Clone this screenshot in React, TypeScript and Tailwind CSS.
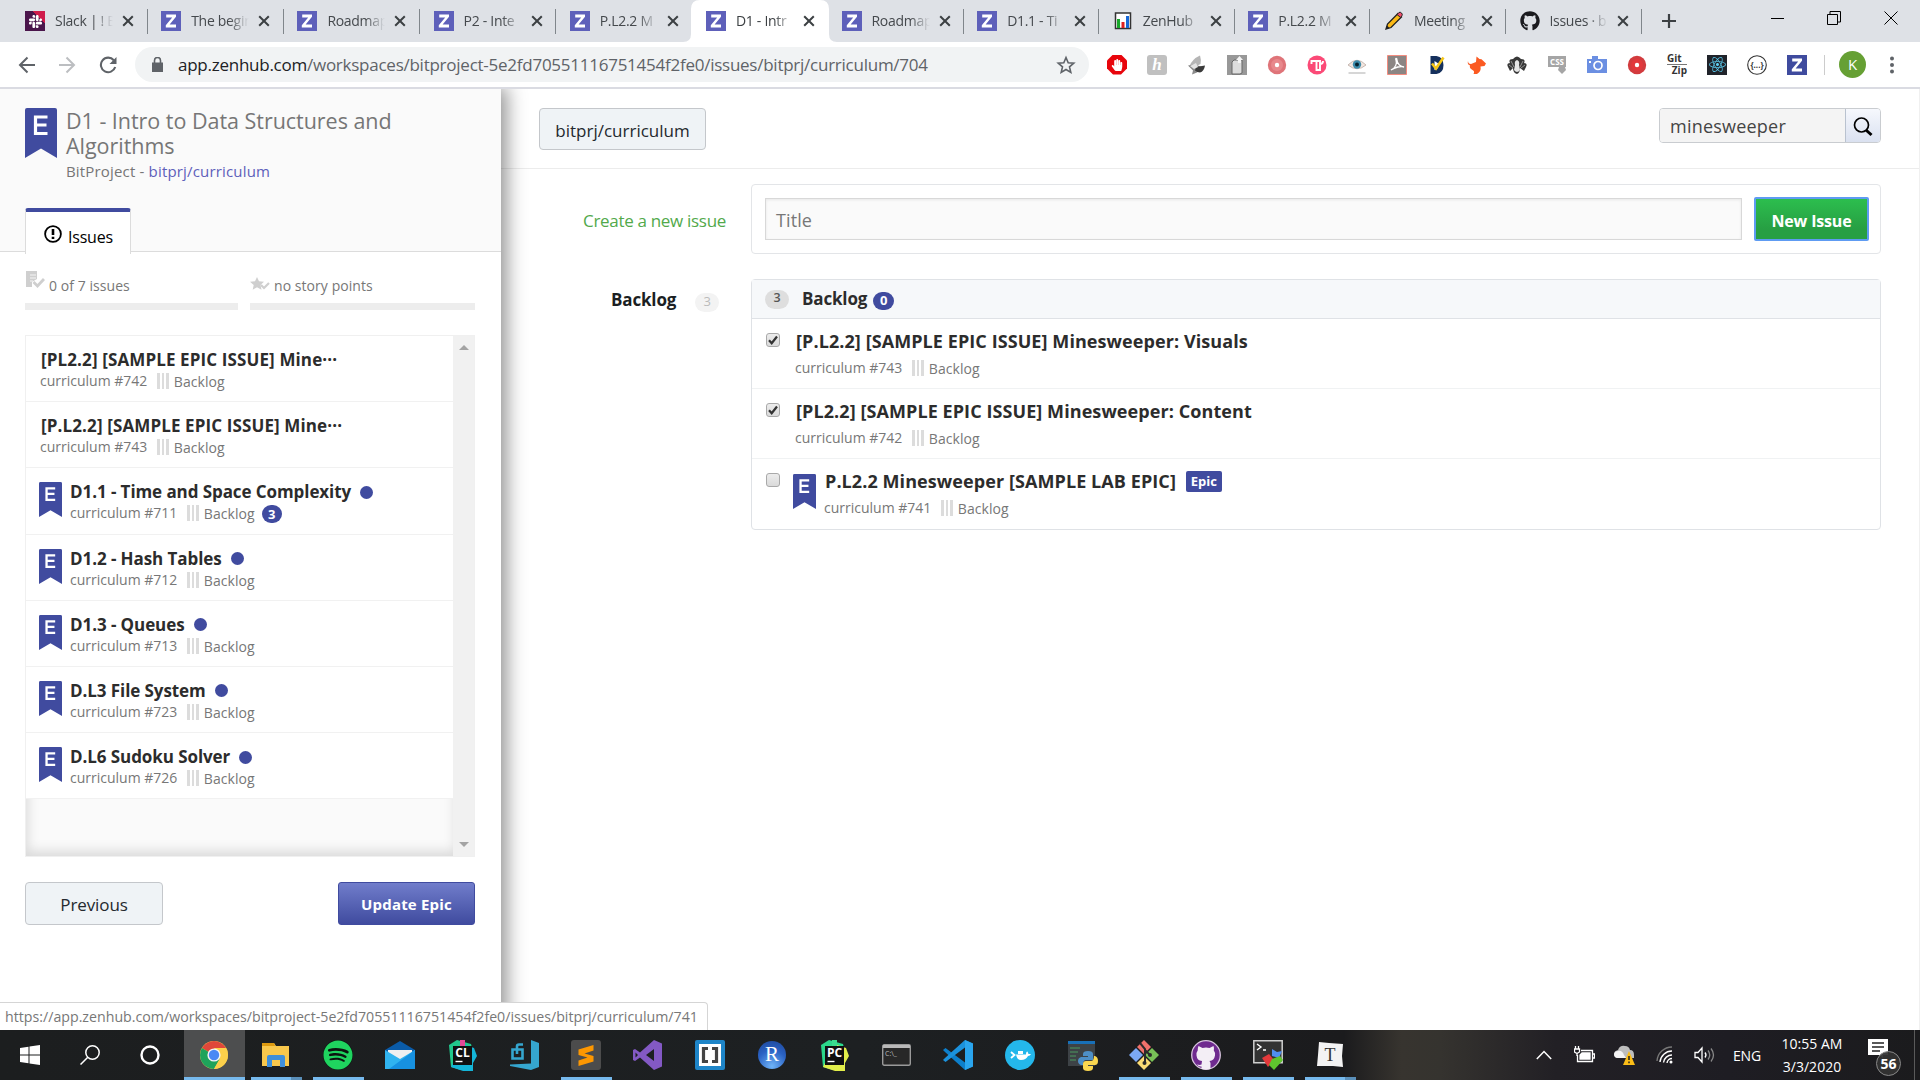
import type { ReactNode } from 'react';
import { FaGithub, FaSpotify, FaReact, FaHandPaper, FaSlack } from 'react-icons/fa';

/* ---------- shared pieces ---------- */

function ZIcon() {
  return (
    <svg width="20" height="20" viewBox="0 0 20 20">
      <rect width="20" height="20" fill="#5e60ba" />
      <path d="M5.2 3.5h9.8v2.3L8.6 13.6H15v3H4.8v-2.4l6.4-7.8H5.2z" fill="#fff" />
    </svg>
  );
}

function Bookmark({ w, h }: { w: number; h: number }) {
  return (
    <svg width={w} height={h} viewBox="0 0 32 50" preserveAspectRatio="none" className="block shrink-0">
      <path d="M2 0h28a2 2 0 0 1 2 2v48L16 40.5 0 50V2a2 2 0 0 1 2-2z" fill="#404b9f" />
      <path d="M22.5 9H10.5v16.5h12M10.500 17h11" fill="none" stroke="#fff" strokeWidth="3.200" />
    </svg>
  );
}

function Bars() {
  return (
    <div className="flex gap-[2px]">
      <i className="h-4 w-[2.6px] bg-[#dcdcdc]" />
      <i className="h-4 w-[2.6px] bg-[#dcdcdc]" />
      <i className="h-4 w-[2.6px] bg-[#dcdcdc]" />
    </div>
  );
}

function Meta({ n }: { n: number }) {
  return (
    <div className="flex items-center text-[14px] leading-5 text-[#777]">
      <span className="w-[117px]">curriculum #{n}</span>
      <Bars />
      <span className="ml-[5px] mt-[2px] tracking-[0.08px]">Backlog</span>
    </div>
  );
}

/* ---------- browser chrome ---------- */

const tabs: { icon: string; title: string }[] = [
  { icon: 'slack', title: 'Slack | ! B' },
  { icon: 'z', title: 'The begin' },
  { icon: 'z', title: 'Roadmap' },
  { icon: 'z', title: 'P2 - Inte' },
  { icon: 'z', title: 'P.L2.2 M' },
  { icon: 'z', title: 'D1 - Intr' },
  { icon: 'z', title: 'Roadmap' },
  { icon: 'z', title: 'D1.1 - Ti' },
  { icon: 'chart', title: 'ZenHub' },
  { icon: 'z', title: 'P.L2.2 M' },
  { icon: 'pencil', title: 'Meeting' },
  { icon: 'github', title: 'Issues · b' },
];

function Favicon({ kind }: { kind: string }) {
  if (kind === 'z') return <ZIcon />;
  if (kind === 'github') return <FaGithub size={20} color="#1b1b1f" />;
  if (kind === 'slack')
    return (
      <div className="flex size-5 items-center justify-center bg-[linear-gradient(45deg,#4a154b_68%,#cf1b4b_69%)]">
        <FaSlack size={15} color="#fff" />
      </div>
    );
  if (kind === 'chart')
    return (
      <svg width="20" height="20" viewBox="0 0 20 20">
        <path d="M2.5 2h15v15.500H2.500z" fill="#fff" stroke="#333" strokeWidth="1.500" />
        <path d="M4 8h3v9H4z" fill="#19a82b" />
        <path d="M8.500 11h3v6h-3z" fill="#e02020" />
        <path d="M13 5h3v12h-3z" fill="#1668d8" />
      </svg>
    );
  return (
    <svg width="20" height="20" viewBox="0 0 20 20">
      <path d="M2 18l1.500-5L14 2.500l3.500 3.500L7 16.500z" fill="#fbb915" stroke="#222" strokeWidth="1.300" />
      <path d="M13 3.500L15 1.500q1.200-.8 2.500.5t.5 2.500L16.500 6.500z" fill="#f0506e" stroke="#222" />
      <path d="M2 18l1-3.500 2.500 2.500z" fill="#222" />
    </svg>
  );
}

function Tab({ icon, title, active, sep, wide }: { icon: string; title: string; active: boolean; sep: boolean; wide: boolean }) {
  return (
    <div className={`relative flex h-[42px] shrink-0 items-center pl-[13.500px] ${wide ? 'w-[136.2px]' : 'w-[135.6px]'}`}>
      {active && (
        <svg className="absolute -left-[9px] top-0" width="154" height="42" viewBox="0 0 154 42">
          <path d="M0 42q8 0 8-8V9q0-9 9-9h120q9 0 9 9v25q0 8 8 8z" fill="#fff" />
        </svg>
      )}
      <span className="relative flex size-5">
        <Favicon kind={icon} />
      </span>
      <span
        className={`relative ml-[10px] w-[58px] overflow-hidden whitespace-nowrap text-[14px] leading-5 tracking-[-0.3px] [mask-image:linear-gradient(to_right,#000_66%,transparent_100%)] ${active ? 'text-[#3c4043]' : 'text-[#45494d]'}`}
      >
        {title}
      </span>
      <svg className="relative ml-[9px]" width="12" height="12" viewBox="0 0 12 12">
        <path d="M1.200 1.200l9.600 9.600M10.800 1.200L1.200 10.800" stroke="#3c4043" strokeWidth="2" />
      </svg>
      {sep && <i className="absolute right-0 top-[9px] h-[25px] w-px bg-[#80868b]" />}
    </div>
  );
}

function TabStrip() {
  return (
    <div className="flex h-[42px] items-center bg-[#dee1e6] pl-[11.500px]">
      {tabs.map((t, i) => (
        <Tab key={i} icon={t.icon} title={t.title} active={i === 5} sep={i !== 4 && i !== 5} wide={i < 5} />
      ))}
      <svg className="ml-[19px]" width="16" height="16" viewBox="0 0 16 16">
        <path d="M8 1v14M1 8h14" stroke="#3c4043" strokeWidth="2.200" />
      </svg>
      <div className="ml-auto flex items-center gap-[43px] pb-[6px] pr-[22px]">
        <svg width="13" height="13" viewBox="0 0 13 13"><path d="M0 6.500h13" stroke="#000" /></svg>
        <svg width="14" height="14" viewBox="0 0 14 14" fill="none" stroke="#000">
          <path d="M.5 3.500h10v10H.5zM3 3.500V.5h10.500v10.500H10.500" />
        </svg>
        <svg width="14" height="14" viewBox="0 0 14 14"><path d="M.5.5l13 13M13.500.5l-13 13" stroke="#000" /></svg>
      </div>
    </div>
  );
}

const extensions: ReactNode[] = [
  <div className="flex size-5 items-center justify-center bg-[#e8050c] [clip-path:polygon(30%_0,70%_0,100%_30%,100%_70%,70%_100%,30%_100%,0_70%,0_30%)]"><FaHandPaper size={12} color="#fff" /></div>,
  <div className="flex size-5 items-center justify-center rounded-[3px] bg-[#c0c0c0] font-['Liberation_Serif'] text-[17px] font-bold italic leading-5 text-white">h</div>,
  <svg width="20" height="20" viewBox="0 0 20 20">
    <path d="M13 .5Q14.500 5 13.500 9L8 12H2Q5 4 13 .5z" fill="#b5b5b5" />
    <path d="M1 10.500l6-1 7 2-4 6-5 2 1-4z" fill="#8a8a8a" /><path d="M9 12l9-1.500q-1 6-5 7-3 0-5-2z" fill="#3a3a3a" /><path d="M3 11l6-3 2 4-4 2z" fill="#e4e4e4" />
  </svg>,
  <svg width="20" height="20" viewBox="0 0 20 20">
    <path d="M0 0h20v20H0z" fill="#989898" /><path d="M5 7l2-2h8v13l-2 1H5z" fill="#ddd" stroke="#666" />
    <path d="M11 8V5H9l3.500-4L16 5h-2v3z" fill="#f5f5f5" />
  </svg>,
  <svg width="20" height="20" viewBox="0 0 20 20"><circle cx="10" cy="10" r="9.200" fill="#df7479" /><circle cx="10" cy="10" r="6" fill="#e8888c" /><circle cx="10" cy="10" r="2.200" fill="#fff" /></svg>,
  <svg width="20" height="20" viewBox="0 0 20 20"><circle cx="10" cy="10" r="9.500" fill="#fb4a77" /><path d="M4.500 9V6H13v9H9.500V6M13 9q3 0 3-3" stroke="#fff" strokeWidth="1.900" fill="none" /></svg>,
  <svg width="20" height="20" viewBox="0 0 20 20">
    <path d="M1 10Q10 .5 19 10 10 17.500 1 10z" fill="#f3e6df" stroke="#b9aaa3" strokeWidth=".8" /><circle cx="10" cy="9.500" r="4.200" fill="#3d8cab" /><circle cx="10" cy="9.500" r="2" fill="#06222f" />
    <path d="M1.500 18h17" stroke="#ccc" strokeWidth="1.600" />
  </svg>,
  <svg width="20" height="20" viewBox="0 0 20 20">
    <path d="M.5.500h19v19H.5z" fill="#8b8583" stroke="#f28c7f" /><path d="M4 15c5-2 6-7 5-10-1-2 1-2 1 0 0 4 4 7 7 7-3-1-9 0-13 3z" fill="none" stroke="#fff" strokeWidth="1.300" />
  </svg>,
  <svg width="20" height="20" viewBox="0 0 20 20">
    <path d="M3.500 1h6q7 1 7 9t-7 9h-6z" fill="#15305d" /><path d="M7.500 6v9q4.500-1 4.500-6z" fill="#fff" /><path d="M5 8.500l4 5 7.500-11" stroke="#f5c518" strokeWidth="2.600" fill="none" />
  </svg>,
  <svg width="20" height="20" viewBox="0 0 20 20">
    <path d="M1 6q0 3 3 3l5-2 .5-5.500 3 2.500 2 .3L19 8.500 17.500 11l-4 .5q1 5-3.500 7.500H6.500Q8 16 5.500 15 2 13 3 10.500 0 9.500 1 6z" fill="#fb5a22" />
  </svg>,
  <svg width="20" height="20" viewBox="0 0 20 20">
    <path d="M1 12Q-1 8 3 8 1 4 6 4q4-5 8 0 5 0 3 4 4 0 2 4l-2 4-4-3q0 5-3 6-4-1-4-6l-3 3z" fill="#383838" />
    <path d="M10 5q3 1 2 5l1 5q-3 4-6 0l1-5q-1-4 2-5z" fill="#e6e6e6" /><path d="M4 6l3 6M16 6l-3 6M2 10l4 3M18 10l-4 3" stroke="#aaa" strokeWidth=".8" />
  </svg>,
  <svg width="20" height="20" viewBox="0 0 20 20">
    <path d="M1 1h18v11h-1l1 3-4 4-4-4 1-3H1z" fill="#a5a5a5" />
    <text x="10" y="9.500" fontSize="8" fontWeight="700" textAnchor="middle" fill="#fff">CSS</text>
  </svg>,
  <svg width="20" height="20" viewBox="0 0 20 20">
    <path d="M0 4h5V1h6v3h9v14H0z" fill="#6b8fe2" /><circle cx="11" cy="10.500" r="4" fill="none" stroke="#fff" strokeWidth="1.700" /><path d="M2 6h2v2H2z" fill="#fff" />
  </svg>,
  <svg width="20" height="20" viewBox="0 0 20 20"><circle cx="10" cy="10" r="9.200" fill="#d23b3e" /><circle cx="10" cy="10" r="6" fill="#e2383c" /><circle cx="10" cy="10" r="2.200" fill="#fff" /></svg>,
  <div className="flex w-5 flex-col items-start text-[10px] font-bold leading-[11px] text-[#333]"><span className="w-full border-b border-[#777]">Git</span><span className="self-end">Zip</span></div>,
  <div className="flex size-5 items-center justify-center bg-[#20232a]"><FaReact size={17} color="#5ccdf0" /></div>,
  <svg width="20" height="20" viewBox="0 0 20 20">
    <circle cx="10" cy="10" r="9.300" fill="#fff" stroke="#333" strokeWidth="1.100" />
    <text x="10" y="13" fontSize="8" fontWeight="700" textAnchor="middle" fill="#333">{'{...}'}</text>
  </svg>,
  <svg width="20" height="20" viewBox="0 0 20 20"><path d="M0 0h20v20H0z" fill="#3f4b9e" /><path d="M5.200 3.500h9.800v2.300L8.600 13.600H15v3H4.800v-2.400l6.400-7.800H5.200z" fill="#fff" /></svg>,
];

function Toolbar() {
  return (
    <div className="flex h-[47px] items-center border-b-2 border-[#dadbe2] bg-white">
      <svg className="ml-[18px]" width="17" height="18" viewBox="0 0 17 18" fill="none" stroke="#5f6368" strokeWidth="2">
        <path d="M17 9H2M9.500 1.500L2 9l7.500 7.500" />
      </svg>
      <svg className="ml-[24px]" width="17" height="18" viewBox="0 0 17 18" fill="none" stroke="#bcbec1" strokeWidth="2">
        <path d="M0 9h15M7.500 1.500L15 9l-7.500 7.500" />
      </svg>
      <svg className="ml-[23px]" width="18" height="18" viewBox="0 0 18 18">
        <path d="M14.800 4.200A7.300 7.300 0 1 0 16.200 11" fill="none" stroke="#5f6368" strokeWidth="2.100" />
        <path d="M17.500 1v7h-7z" fill="#5f6368" />
      </svg>
      <div className="ml-[18px] flex h-[35px] w-[954px] items-center rounded-full bg-[#f1f3f4] pl-[17px]">
        <svg width="11" height="15" viewBox="0 0 11 15">
          <path d="M0 5.500h11V15H0z" fill="#5f6368" /><path d="M2.500 6V3.500a3 3 0 0 1 6 0V6" fill="none" stroke="#5f6368" strokeWidth="1.600" />
        </svg>
        <span className="ml-[15px] whitespace-nowrap text-[17px] tracking-[-0.25px] text-[#5f6368]">
          <span className="text-[#202124]">app.zenhub.com</span>/workspaces/bitproject-5e2fd70551116751454f2fe0/issues/bitprj/curriculum/704
        </span>
        <svg className="ml-auto mr-[13px]" width="20" height="20" viewBox="0 0 20 20">
          <path d="M10 2.500l2.200 5.200 5.600.5-4.300 3.700 1.300 5.500-4.800-2.900-4.800 2.900 1.300-5.500L2.200 8.200l5.600-.5z" fill="none" stroke="#5f6368" strokeWidth="1.600" />
        </svg>
      </div>
      <div className="ml-[8px] flex">
        {extensions.map((e, i) => (
          <div key={i} className="flex w-10 items-center justify-center">{e}</div>
        ))}
      </div>
      <i className="ml-[7px] h-5 w-px bg-[#ccc]" />
      <div className="ml-[14px] flex size-[27px] items-center justify-center rounded-full bg-[#66a034] text-[15px] text-white">K</div>
      <svg className="ml-[24px]" width="4" height="18" viewBox="0 0 4 18" fill="#5f6368">
        <circle cx="2" cy="2.500" r="2" /><circle cx="2" cy="9" r="2" /><circle cx="2" cy="15.500" r="2" />
      </svg>
    </div>
  );
}

/* ---------- side panel ---------- */

const epicIssues: { title: string; n: number; epic: boolean; count?: number }[] = [
  { title: '[PL2.2] [SAMPLE EPIC ISSUE] Mine···', n: 742, epic: false },
  { title: '[P.L2.2] [SAMPLE EPIC ISSUE] Mine···', n: 743, epic: false },
  { title: 'D1.1 - Time and Space Complexity', n: 711, epic: true, count: 3 },
  { title: 'D1.2 - Hash Tables', n: 712, epic: true },
  { title: 'D1.3 - Queues', n: 713, epic: true },
  { title: 'D.L3 File System', n: 723, epic: true },
  { title: 'D.L6 Sudoku Solver', n: 726, epic: true },
];

function EpicRow({ title, n, epic, count }: { title: string; n: number; epic: boolean; count?: number }) {
  return (
    <div className={`flex h-[66.2px] border-b border-[#f1f1f1] bg-white ${epic ? 'pl-[13px]' : 'pl-[14px]'}`}>
      {epic && <div className="mr-[8px] mt-[14px]"><Bookmark w={23} h={35} /></div>}
      <div className="pt-[12px]">
        <div className="flex h-[23px] items-center">
          <span className={`whitespace-nowrap text-[17px] font-bold leading-[23px] text-[#2c2c2c] ${epic ? '-tracking-[0.080px]' : 'pl-px tracking-[0.12px]'}`}>{title}</span>
          {epic && <i className="ml-[9px] mt-px size-[13px] rounded-full bg-[#404b9f]" />}
        </div>
        <div className="flex h-5 items-center">
          <Meta n={n} />
          {count && <span className="ml-[7px] mt-[2px] flex h-[18px] w-5 items-center justify-center rounded-full bg-[#404b9f] text-[13px] font-bold text-white">{count}</span>}
        </div>
      </div>
    </div>
  );
}

function SidePanel() {
  return (
    <aside className="relative z-10 flex w-[501px] shrink-0 flex-col bg-white shadow-[4px_0_18px_2px_rgba(0,0,0,0.42)] [clip-path:inset(0_-40px_0_0)]">
      <div className="flex h-[163px] flex-col border-b border-[#dcdcdc] bg-[#fafafa] pl-[25px]">
        <div className="flex pt-[19px]">
          <Bookmark w={32} h={50} />
          <div className="ml-[9px] text-[#767676]">
            <div className="w-[400px] text-[21.500px] leading-[25px] tracking-[-0.030px]">D1 - Intro to Data Structures and<br />Algorithms</div>
            <div className="text-[15px] leading-[26px] tracking-[0.17px]">BitProject - <span className="text-[#5e60ba]">bitprj/curriculum</span></div>
          </div>
        </div>
        <div className="mt-auto -mb-[3px] flex h-[46px] w-[106px] shrink-0 items-center rounded-t-[3px] border-x border-t-4 border-x-[#dcdcdc] border-t-[#404b9f] bg-white pl-[18px]">
          <svg className="mt-px" width="18" height="18" viewBox="0 0 18 18">
            <circle cx="9" cy="9" r="7.900" fill="none" stroke="#000" strokeWidth="1.800" />
            <path d="M9 4v6M9 11.700v2.300" stroke="#000" strokeWidth="2.600" />
          </svg>
          <span className="ml-[6px] mt-[7px] text-[16px] tracking-[-0.2px] text-black">Issues</span>
        </div>
      </div>
      <div className="mt-[19px] flex gap-3 pl-[25px] text-[14px] tracking-[0.06px] text-[#777]">
        <div className="w-[213px]">
          <div className="flex h-[32px] items-start">
            <svg width="20" height="17" viewBox="0 0 20 17">
              <path d="M1 0h11v8l-5 3v5H1z" fill="#cfcfcf" /><path d="M5 4h6M5 7h6M5 10h3" stroke="#fff" strokeWidth=".8" />
              <path d="M8.500 11l4 4 6.500-7" stroke="#cfcfcf" strokeWidth="2.800" fill="none" />
            </svg>
            <span className="ml-[4px] mt-[5px] leading-5">0 of 7 issues</span>
          </div>
          <div className="h-[7px] bg-[#ededed]" />
        </div>
        <div className="w-[225px]">
          <div className="flex h-[32px] items-start">
            <svg className="mt-[6px]" width="20" height="13" viewBox="0 0 20 13">
              <path d="M7 0l2 4.300 5 .4-3.500 3.200 1 4.800L7 10.200 2.700 12.700l1-4.800L0 4.700l5-.4z" fill="#cfcfcf" />
              <path d="M11 8l3 3 5-5" stroke="#cfcfcf" strokeWidth="2.200" fill="none" />
            </svg>
            <span className="ml-[4px] mt-[5px] leading-5">no story points</span>
          </div>
          <div className="h-[7px] bg-[#ededed]" />
        </div>
      </div>
      <div className="ml-[25px] mt-[25px] flex h-[522px] w-[450px] border border-[#f0f0f0]">
        <div className="min-w-0 flex-1 bg-[#fafafa] shadow-[inset_2px_-5px_12px_rgba(0,0,0,0.13)]">
          {epicIssues.map((it) => (
            <EpicRow key={it.n} {...it} />
          ))}
        </div>
        <div className="flex w-[21px] flex-col items-center justify-between bg-[#f1f1f1] pb-[9px] pt-[9px]">
          <svg width="10" height="5" viewBox="0 0 10 5"><path d="M0 5l5-5 5 5z" fill="#a3a3a3" /></svg>
          <svg width="10" height="5" viewBox="0 0 10 5"><path d="M0 0l5 5 5-5z" fill="#a3a3a3" /></svg>
        </div>
      </div>
      <div className="mt-[25px] flex justify-between pl-[25px] pr-[26px]">
        <button className="h-[43px] w-[138px] rounded-[4px] border border-[#c4c7cb] bg-[#eff3f6] pt-[3px] text-[17px] tracking-[-0.1px] text-[#24292e]">Previous</button>
        <button className="h-[43px] w-[137px] rounded-[3px] border border-[#404b9f] bg-linear-to-b from-[#717dcb] to-[#404b9f] pt-[2px] text-[15px] font-bold tracking-[0.2px] text-white">Update Epic</button>
      </div>
    </aside>
  );
}

/* ---------- main area ---------- */

function Checkbox({ checked }: { checked: boolean }) {
  return (
    <span className="flex size-[14px] items-center justify-center rounded-[3px] border border-[#a9a9a9] bg-linear-to-b from-[#ececec] to-[#dadada]">
      {checked && (
        <svg width="10" height="10" viewBox="0 0 10 10"><path d="M1 5.200l2.700 3L9 1.500" fill="none" stroke="#333" strokeWidth="2.200" /></svg>
      )}
    </span>
  );
}

function ResultRow({ title, n, checked, epic, last }: { title: string; n: number; checked: boolean; epic?: boolean; last?: boolean }) {
  return (
    <div className={`flex h-[70px] pl-[14px] ${last ? '' : 'border-b border-[#f0f2f3]'}`}>
      <div className="pt-[14px]"><Checkbox checked={checked} /></div>
      {epic && <div className="ml-[13px] mt-[15px]"><Bookmark w={23} h={35} /></div>}
      <div className={`pt-[10px] ${epic ? 'ml-[8px]' : 'ml-[15px]'}`}>
        <div className="flex h-6 items-center">
          <span className="whitespace-nowrap pl-px text-[18px] font-bold leading-6 tracking-[0.080px] text-[#2c2c2c]">{title}</span>
          {epic && <span className="ml-[10px] mt-px flex h-[21px] w-[36px] items-center justify-center rounded-[2px] bg-[#404b9f] text-[13px] font-bold text-white">Epic</span>}
        </div>
        <div className="mt-[4px]"><Meta n={n} /></div>
      </div>
    </div>
  );
}

function MainArea() {
  return (
    <main className="flex min-w-0 flex-1 flex-col border-r border-[#f0f0f0] bg-white">
      <header className="flex h-[80px] shrink-0 items-start justify-between border-b border-[#ececec] pl-[38px] pr-[38px] pt-[19px]">
        <button className="h-[42px] w-[167px] rounded-[4px] border border-[#c4c7cb] bg-[#eff3f6] pt-[3px] text-[17px] text-[#24292e]">bitprj/curriculum</button>
        <div className="flex h-[35px] w-[222px] overflow-hidden rounded-[4px] border border-[#c9ccd0]">
          <div className="flex-1 bg-[#f4f4f4] pl-[10px] text-[18px] leading-[34px] tracking-[0.22px] text-[#444]">minesweeper</div>
          <div className="flex w-[35px] items-center justify-center border-l border-[#b9c2cf] bg-linear-to-b from-[#f6f8fd] to-[#dae1f0]">
            <svg className="mt-[3px]" width="20" height="20" viewBox="0 0 20 20" fill="none" stroke="#000">
              <circle cx="8.500" cy="8" r="7" strokeWidth="1.700" /><path d="M13 13l5.500 5" strokeWidth="3" />
            </svg>
          </div>
        </div>
      </header>
      <div className="mt-[15px] flex">
        <div className="w-[225px] pt-[25px] text-right text-[17px] leading-6 tracking-[-0.31px] text-[#52a94b]">Create a new issue</div>
        <div className="ml-[25px] flex h-[70px] w-[1130px] rounded-[4px] border border-[#e3e5e8] pl-[13px] pt-[13px]">
          <div className="h-[42px] w-[977px] border border-[#d8d8d8] bg-[#fafafa] pl-[10px] text-[18px] leading-[42px] tracking-[0.1px] text-[#777] shadow-[inset_0_1px_3px_rgba(0,0,0,0.08)]">Title</div>
          <button className="-mt-px ml-[12px] h-[44px] w-[115px] rounded-[2px] border-2 border-[#5e9bf2] bg-linear-to-b from-[#2cbe4e] to-[#279f43] to-75% pt-[3px] text-[16px] font-bold tracking-[-0.16px] text-white">New Issue</button>
        </div>
      </div>
      <div className="mt-[25px] flex">
        <div className="flex w-[250px] items-start pl-[110px] pt-[9px]">
          <span className="text-[17px] font-bold leading-6 tracking-[-0.15px] text-[#1b1f23]">Backlog</span>
          <span className="ml-[19px] mt-[5px] flex h-[19px] w-6 items-center justify-center rounded-full bg-[#f3f3f3] pb-px text-[13px] text-[#bbb]">3</span>
        </div>
        <section className="w-[1130px] rounded-[4px] border border-[#dfe2e6]">
          <div className="flex h-[39px] items-center border-b border-[#dfe2e6] bg-[#f6f8fa] pl-[13px]">
            <span className="flex h-[19px] w-6 items-center justify-center rounded-full bg-[#dedede] pb-px text-[12.500px] font-semibold text-[#555]">3</span>
            <span className="ml-[13px] text-[17px] font-bold tracking-[-0.15px] text-[#2c2c2c]">Backlog</span>
            <span className="ml-[6px] mt-[3px] flex h-[18px] w-[21px] items-center justify-center rounded-full bg-[#404b9f] text-[13px] font-bold text-white">0</span>
          </div>
          <ResultRow title="[P.L2.2] [SAMPLE EPIC ISSUE] Minesweeper: Visuals" n={743} checked />
          <ResultRow title="[PL2.2] [SAMPLE EPIC ISSUE] Minesweeper: Content" n={742} checked />
          <ResultRow title="P.L2.2 Minesweeper [SAMPLE LAB EPIC]" n={741} checked={false} epic last />
        </section>
      </div>
    </main>
  );
}

/* ---------- taskbar ---------- */

function JetBrains({ label, a, b, c }: { label: string; a: string; b: string; c: string }) {
  return (
    <svg width="29" height="31" viewBox="0 0 29 31">
      <path d="M1 5L9 0l14 4 2 8-12 18-10-3z" fill={a} />
      <path d="M14 4l12 4 3 8-4 7v8H15L3 27z" fill={b} />
      <path d="M12 0h5v8h-5z" fill={c} />
      <path d="M5 6h19v19H5z" fill="#101010" />
      <text x="14.500" y="17" fontSize="12" fontWeight="700" textAnchor="middle" fill="#fff">{label}</text>
      <path d="M7.500 21.500h7" stroke="#fff" strokeWidth="1.400" />
    </svg>
  );
}

const apps: { icon: ReactNode; line?: string; stack?: boolean; active?: boolean }[] = [
  {
    active: true,
    line: 'w-full',
    icon: (
      <svg width="28" height="28" viewBox="0 0 28 28">
        <circle cx="14" cy="14" r="14" fill="#fcd04b" />
        <path d="M14 14L1.900 7A14 14 0 0 1 26.100 7z" fill="#e0473a" />
        <path d="M1.900 7A14 14 0 0 0 14 28L20 17.500 14 14z" fill="#1fa35b" />
        <path d="M26.100 7H14l6 10.500L14 28A14 14 0 0 0 26.100 7z" fill="#fcd04b" />
        <circle cx="14" cy="14" r="6.600" fill="#f4f4f4" /><circle cx="14" cy="14" r="5.200" fill="#4a89f4" />
      </svg>
    ),
  },
  {
    line: 'w-[51px]',
    stack: true,
    icon: (
      <svg width="28" height="28" viewBox="0 0 28 28">
        <path d="M0 2h12l2 3h13v20H0z" fill="#f9c84c" /><path d="M0 2h12l1 3H0z" fill="#dd9a10" />
        <path d="M5 26V16q0-2 2-2h14q2 0 2 2v10h-5v-7h-8v7z" fill="#3f8fdb" />
      </svg>
    ),
  },
  { line: 'w-[51px]', icon: <div className="rounded-full bg-[#0c1410]"><FaSpotify size={30} color="#1fd45f" /></div> },
  {
    icon: (
      <svg width="30" height="30" viewBox="0 0 30 30">
        <path d="M0 10L15 1l15 9v5H0z" fill="#0a5ba8" /><path d="M3 10h24v9H3z" fill="#f0f0f0" />
        <path d="M0 10l15 9 15-9v19H0z" fill="#30b3ef" /><path d="M30 10L4 29h26z" fill="#1791e0" />
      </svg>
    ),
  },
  { icon: <JetBrains label="CL" a="#21c78c" b="#14b5d8" c="#e24a97" /> },
  {
    icon: (
      <svg width="30" height="30" viewBox="0 0 30 30">
        <path d="M22 0l8 3v24l-8 3L1 26v-1.500l21-1z" fill="#35a6cf" />
        <path d="M3.500 9.500h10v9h-10zM8 14V6.500q0-2 2-2h4" fill="none" stroke="#35a6cf" strokeWidth="2.600" />
      </svg>
    ),
  },
  {
    line: 'w-[51px]',
    icon: (
      <svg width="30" height="30" viewBox="0 0 30 30">
        <rect width="30" height="30" rx="3" fill="#4c4c4c" />
        <path d="M7.500 9.500l15-4.500v5.500L13.500 13.500l9 2.500v5.500L7.500 26v-5.500l9-3-9-2.500z" fill="#fd9701" />
      </svg>
    ),
  },
  {
    icon: (
      <svg width="30" height="30" viewBox="0 0 30 30">
        <path d="M21 0l8 3.500v23L21 30 7 17.500 2 21 0 20V10l2-1 5 3.500zM21 9l-8 6 8 6zM2.500 12.500v5L5 15z" fill="#8359c4" fillRule="evenodd" />
      </svg>
    ),
  },
  {
    icon: (
      <svg width="30" height="30" viewBox="0 0 30 30">
        <rect width="30" height="30" rx="2" fill="#1e85c8" /><path d="M4 4h22v22H4z" fill="#fff" />
        <path d="M13 8.500H8.500v13H13M17 8.500h4.500v13H17" fill="none" stroke="#444" strokeWidth="3.200" />
      </svg>
    ),
  },
  {
    icon: (
      <div className="flex size-[28px] items-center justify-center rounded-full bg-[radial-gradient(circle_at_50%_90%,#6fb4f8,#2a62c4_55%,#1d4596)] font-['Liberation_Serif'] text-[21px] text-white">R</div>
    ),
  },
  { icon: <JetBrains label="PC" a="#2bd78b" b="#e2ee4a" c="#3bdc8f" /> },
  {
    icon: (
      <svg width="29" height="22" viewBox="0 0 29 22">
        <rect x=".7" y=".7" width="27.600" height="20.600" rx="1.500" fill="#282828" stroke="#9a9a9a" strokeWidth="1.400" />
        <path d="M1 1h27v3H1z" fill="#b9b9b9" /><text x="3" y="11.500" fontSize="7" fill="#bbb">C:\_</text>
      </svg>
    ),
  },
  {
    icon: (
      <svg width="30" height="30" viewBox="0 0 30 30">
        <path d="M22 0l8 3.500v23L22 30 2 12 0 10l2.500-2L22 22.500z" fill="#0d7fcb" /><path d="M22 0v7.500L2.500 22 0 20l2-2z" fill="#1b92dd" /><path d="M22 0l8 3.500v23L22 30z" fill="#2aa5ee" />
      </svg>
    ),
  },
  {
    icon: (
      <svg width="30" height="30" viewBox="0 0 30 30">
        <circle cx="15" cy="15" r="15" fill="#24b7eb" /><path d="M6 12l3.500 3L6 18" stroke="#fff" strokeWidth="1.800" fill="none" />
        <path d="M11 14.500h10q0-3 1.500-3l1 2.500h2.500q-1 2-3 2-2 4-7 4-4 0-5-5.500zM13 11h5v3h-5z" fill="#fff" />
      </svg>
    ),
  },
  {
    icon: (
      <div className="relative h-[29px] w-[29px]">
        <svg width="27" height="25" viewBox="0 0 27 25"><path d="M0 0h27v25H0z" fill="#3d4246" /><path d="M0 0h27v3H0z" fill="#1870b8" /><path d="M2 7h10M2 11h8M2 15h6M2 19h6" stroke="#4c9a5e" strokeWidth="1.200" /></svg>
        <svg className="absolute -bottom-px -right-px" width="20" height="20" viewBox="0 0 20 20">
          <path d="M10 0q5 0 5 3v6H8q-3 0-3 5H3q-3-1-3-4t3-4h7V5H5V3q0-3 5-3z" fill="#4e8fc7" />
          <path d="M10 20q-5 0-5-3v-4q0-3 3-3h5q3 0 3-5h1q3 1 3 5t-3 4h-7v1h5v2q0 3-5 3z" fill="#fbd74f" />
        </svg>
      </div>
    ),
  },
  {
    line: 'w-[51px]',
    icon: (
      <svg width="30" height="30" viewBox="0 0 30 30">
        <path d="M15 0l7 7-7 7-7-7z" fill="#f0716c" /><path d="M7 8l7 7-7 7-7-7z" fill="#7ba8f5" />
        <path d="M23 8l7 7-7 7-7-7z" fill="#78c257" /><path d="M15 16l7 7-7 7-7-7z" fill="#fbdc75" />
        <path d="M11 3l5 6v13M16 10l5 5" stroke="#2b2b2b" strokeWidth="2" fill="none" /><circle cx="15.500" cy="23" r="2" fill="#2b2b2b" /><circle cx="21" cy="15" r="2" fill="#2b2b2b" />
      </svg>
    ),
  },
  {
    line: 'w-[51px]',
    icon: (
      <svg width="30" height="30" viewBox="0 0 30 30">
        <circle cx="15" cy="15" r="14.300" fill="#6f2b8f" stroke="#d8c5de" strokeWidth="1.300" />
        <path d="M7.500 6l4 2q3.500-.8 7 0l4-2q1 2.500.3 4.500 1.700 2 1.200 5-.8 5-5.500 5.500l1 2V29q-4.500 1-9 0v-2.500q-3 .5-4.500-2.500 2 1.500 4.500.5l.5-3.500q-5-.5-5.500-5.500-.4-3 1.200-5Q6.500 8.500 7.500 6z" fill="#f3eef5" />
      </svg>
    ),
  },
  {
    line: 'w-[51px]',
    icon: (
      <svg width="30" height="30" viewBox="0 0 30 30">
        <path d="M.8.8h28.400v22H.8z" fill="#333" stroke="#cfcfcf" strokeWidth="1.500" /><path d="M4 4l4 3-4 3M10 10h3" stroke="#fff" strokeWidth="1.400" fill="none" />
        <path d="M19 9l5 3 5-1-3 7-7-2z" fill="#4f8ff0" /><path d="M9 18l7-4 5 6-6 7z" fill="#e3393b" /><path d="M19 19l8-3 3 4-9 10-5-5z" fill="#5fc52e" />
      </svg>
    ),
  },
  {
    line: 'w-[51px]',
    stack: true,
    icon: (
      <svg width="28" height="28" viewBox="0 0 28 28">
        <path d="M3 1l10 1 14 1-1 12 1 11-10-1L1 25 2 14z" fill="#f3f3f3" />
        <text x="14" y="20" fontSize="18" textAnchor="middle" fill="#333" className="font-['Liberation_Serif']">T</text>
      </svg>
    ),
  },
];

function Taskbar() {
  return (
    <div className="flex h-[50px] shrink-0 bg-[linear-gradient(90deg,#1c1e1f_0%,#1d2022_45%,#1b1b1d_70%,#37342f_73%,#35332f_75%,#222025_81%,#1e1d23_90%,#1b1b1d_100%)]">
      <div className="flex w-[184px] items-center">
        <svg className="ml-5" width="20" height="20" viewBox="0 0 20 20" fill="#fff">
          <path d="M0 3l8.500-1.300v7.800H0zM9.500 1.500L20 0v9.500H9.500zM0 10.500h8.500v7.800L0 17zM9.500 10.500H20V20L9.500 18.500z" />
        </svg>
        <svg className="ml-[40px]" width="20" height="20" viewBox="0 0 20 20" fill="none" stroke="#fff" strokeWidth="1.500">
          <circle cx="12.500" cy="7.500" r="6.700" /><path d="M7.800 12.300L.5 19.500" />
        </svg>
        <svg className="ml-[40px]" width="20" height="20" viewBox="0 0 20 20"><circle cx="10" cy="10" r="8.500" fill="none" stroke="#fff" strokeWidth="2.400" /></svg>
      </div>
      {apps.map((a, i) => (
        <div key={i} className={`flex shrink-0 flex-col items-center ${a.active ? 'w-[61px] bg-[#4d4e4f] pr-[2px]' : 'w-[62px]'}`}>
          <div className="flex h-[47px] items-center pt-[3px]">{a.icon}</div>
          {a.line && (
            <div className={`flex h-[3px] bg-[#76b9ed] ${a.active ? '-mr-[2px] w-[61px]' : a.line}`}>
              {a.stack && <i className="ml-auto h-[3px] w-[11px] bg-[#5a8fb9]" />}
            </div>
          )}
        </div>
      ))}
      <div className="ml-auto flex items-center text-white">
        <svg width="16" height="10" viewBox="0 0 16 10"><path d="M.8 9L8 1.500 15.200 9" fill="none" stroke="#fff" strokeWidth="1.500" /></svg>
        <svg className="ml-[22px]" width="21" height="18" viewBox="0 0 21 18" fill="none" stroke="#fff" strokeWidth="1.300">
          <path d="M7 4.500h11.500v11H3.500V9" /><path d="M8 7h8v6H6V9z" fill="#fff" /><path d="M19 8h1.500v4H19M1.500 0v3M4.500 0v3M.5 3h5v3L3 7.500.5 6zM3 7v3" />
        </svg>
        <svg className="ml-[19px]" width="21" height="22" viewBox="0 0 21 22">
          <path d="M4 14q-4 0-4-4 0-3 4-4 2-5 7-4 4 0 5 4 4 0 4 5v3z" fill="#bdbdbd" /><path d="M4 14q-4 0-4-4 1-3 4-3 4-1 6 4l2 3z" fill="#f4f4f4" />
          <path d="M15 7l6 14H9z" fill="#fbbd17" /><path d="M15 12v4M15 17.500v1.800" stroke="#222" strokeWidth="1.500" />
        </svg>
        <svg className="ml-[21px]" width="18" height="18" viewBox="0 0 18 18" fill="none" strokeWidth="1.400">
          <path d="M1 15A15 15 0 0 1 16 1" stroke="#777" /><path d="M4 16A12 12 0 0 1 16 5M7.500 16.500A8.500 8.500 0 0 1 16 9M11 17a5 5 0 0 1 5-4.500" stroke="#fff" /><circle cx="15" cy="16" r="1.500" fill="#fff" />
        </svg>
        <svg className="ml-[20px]" width="21" height="18" viewBox="0 0 21 18" fill="none" stroke="#fff" strokeWidth="1.300">
          <path d="M1 6.500h3L8 2v14l-4-4.500H1z" /><path d="M11 6.500q2 2.500 0 5" /><path d="M14 4.500q3.500 4.500 0 9M17 2.500q5 6.500 0 13" stroke="#888" />
        </svg>
        <span className="ml-[18px] w-[29px] text-[14px] tracking-[-0.17px]">ENG</span>
        <div className="ml-[19px] flex w-[62px] flex-col items-center whitespace-nowrap text-[14px] leading-[23px]">
          <span>10:55 AM</span>
          <span>3/3/2020</span>
        </div>
        <div className="relative ml-[25px] mt-[4px] h-[37px] w-[33px]">
          <svg width="20" height="19" viewBox="0 0 20 19"><path d="M0 0h20v16h-5v3l-4-3H0z" fill="#fff" /><path d="M4 4h12M4 8h12M4 12h8" stroke="#222" strokeWidth="1.300" /></svg>
          <span className="absolute bottom-0 right-0 flex size-[25px] items-center justify-center rounded-full border border-[#888] bg-[#333]/95 text-[14px] font-bold">56</span>
        </div>
        <i className="ml-[13px] mr-[5px] h-[50px] w-px bg-[#5a5a5a]" />
      </div>
    </div>
  );
}

export default function App() {
  return (
    <div className="flex h-[1080px] w-[1920px] flex-col overflow-hidden bg-white font-['Open_Sans','Noto_Sans',sans-serif]">
      <TabStrip />
      <Toolbar />
      <div className="relative flex min-h-0 flex-1 overflow-hidden">
        <SidePanel />
        <MainArea />
        <div className="absolute bottom-0 left-0 z-20 h-[28px] w-[708px] whitespace-nowrap rounded-tr-[4px] border-r border-t border-[#d5d5d5] bg-white pl-[5px] text-[14.200px] leading-[28px] text-[#777]">
          https://app.zenhub.com/workspaces/bitproject-5e2fd70551116751454f2fe0/issues/bitprj/curriculum/741
        </div>
      </div>
      <Taskbar />
    </div>
  );
}
